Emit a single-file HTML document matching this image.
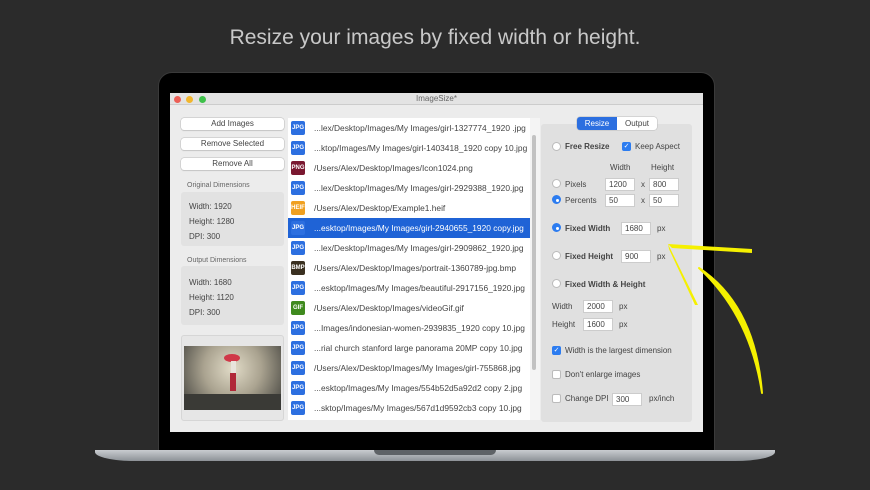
<!DOCTYPE html>
<html><head><style>
*{margin:0;padding:0;box-sizing:border-box}
body{width:870px;height:490px;background:#2b2b2b;position:relative;overflow:hidden;font-family:"Liberation Sans",sans-serif}
.a{position:absolute}
.title{top:26px;left:0;width:870px;text-align:center;color:#c8c8c8;font-size:21px}
.bez{left:158px;top:72px;width:557px;height:380px;background:#000;border-radius:14px 14px 0 0;border:1px solid #3a3a3a}
.base{left:95px;top:450px;width:680px;height:11px;background:linear-gradient(#c9ccd0,#8d9297);border-radius:0 0 40px 40px/0 0 9px 9px}
.notch{left:374px;top:450px;width:122px;height:5px;background:#5e6266;border-radius:0 0 5px 5px}
.win{left:170px;top:93px;width:533px;height:339px;background:#ececec}
.tb{left:0;top:0;width:533px;height:12px;background:#e3e3e3;border-bottom:1px solid #ccc;font-size:8px;color:#666;text-align:center;line-height:12px}
.dot{width:7px;height:7px;border-radius:50%;top:3px}
.btn{left:11px;width:103px;height:12px;background:#fff;border-radius:3px;box-shadow:0 0 0 .5px #bbb,0 1px 1px #ccc;font-size:8px;color:#444;text-align:center;line-height:12px}
.lab{font-size:7px;color:#666;left:17px}
.box{left:11px;width:103px;background:#e2e2e2;border-radius:3px;font-size:8px;color:#444}
.box div{position:absolute;left:8px}
.list{left:118px;top:25px;width:242px;height:302px;background:#fff}
.row{position:absolute;left:0;width:242px;height:20px;font-size:8.4px;color:#444;line-height:20px;white-space:nowrap}
.row span.i{position:absolute;left:3px;top:3px;width:14px;height:14px;border-radius:2px;color:#fff;font-size:6px;font-weight:bold;text-align:center;line-height:14px}
.row span.t{position:absolute;left:26px}
.sel{background:#1f63d6;color:#fff}
.rp{left:371px;top:31px;width:151px;height:298px;background:#e0e0e0;border-radius:3px;font-size:8px;color:#444}
.rp .a{white-space:nowrap}
.rad{width:9px;height:9px;border-radius:50%;background:#fff;border:1px solid #bbb}
.rad.on{background:#2c7cf0;border-color:#2c7cf0}
.rad.on:after{content:"";position:absolute;left:2.5px;top:2.5px;width:3px;height:3px;background:#fff;border-radius:50%}
.cb{width:9px;height:9px;border-radius:2px;background:#fff;border:1px solid #bbb}
.cb.on{background:#2c7cf0;border-color:#2c7cf0;color:#fff;font-size:7px;line-height:7px;text-align:center}
.in{height:13px;background:#fff;border:1px solid #ccc;font-size:8px;line-height:11px;padding-left:3px}
b{font-weight:bold}
</style></head><body>
<div class="a title">Resize your images by fixed width or height.</div>
<div class="a bez"></div>
<div class="a base"></div><div class="a notch"></div>
<div class="a win">
 <div class="a tb">ImageSize*</div>
 <div class="a dot" style="left:4px;background:#ec5f56"></div>
 <div class="a dot" style="left:16px;background:#f2b62c"></div>
 <div class="a dot" style="left:29px;background:#3ec14a"></div>
 <div class="a btn" style="top:25px">Add Images</div>
 <div class="a btn" style="top:45px">Remove Selected</div>
 <div class="a btn" style="top:65px">Remove All</div>
 <div class="a lab" style="top:89px">Original Dimensions</div>
 <div class="a box" style="top:99px;height:54px"><div style="top:10px">Width: 1920</div><div style="top:25px">Height: 1280</div><div style="top:40px">DPI: 300</div></div>
 <div class="a lab" style="top:164px">Output Dimensions</div>
 <div class="a box" style="top:173px;height:59px"><div style="top:12px">Width: 1680</div><div style="top:27px">Height: 1120</div><div style="top:42px">DPI: 300</div></div>
 <div class="a box" style="top:242px;height:86px;background:#e6e6e6;border:1px solid #d6d6d6"></div>
 <div class="a" style="left:14px;top:253px;width:97px;height:64px;background:radial-gradient(circle at 50% 35%,#e2dcc8,#aaa390 45%,#5a5850 85%)"><div class="a" style="left:40px;top:8px;width:16px;height:8px;background:#d03848;border-radius:50%"></div><div class="a" style="left:47px;top:15px;width:5px;height:12px;background:#e8e4dc"></div><div class="a" style="left:46px;top:27px;width:6px;height:18px;background:#b02838"></div><div class="a" style="left:0;top:48px;width:97px;height:16px;background:#3a3a36"></div></div>
 <div class="a list">
  <div class="row" style="top:0"><span class="i" style="background:#2c6fe0">JPG</span><span class="t">...lex/Desktop/Images/My Images/girl-1327774_1920 .jpg</span></div>
  <div class="row" style="top:20px"><span class="i" style="background:#2c6fe0">JPG</span><span class="t">...ktop/Images/My Images/girl-1403418_1920 copy 10.jpg</span></div>
  <div class="row" style="top:40px"><span class="i" style="background:#7a1830">PNG</span><span class="t">/Users/Alex/Desktop/Images/Icon1024.png</span></div>
  <div class="row" style="top:60px"><span class="i" style="background:#2c6fe0">JPG</span><span class="t">...lex/Desktop/Images/My Images/girl-2929388_1920.jpg</span></div>
  <div class="row" style="top:80px"><span class="i" style="background:#f0a020">HEIF</span><span class="t">/Users/Alex/Desktop/Example1.heif</span></div>
  <div class="row sel" style="top:100px"><span class="i" style="background:#2c6fe0">JPG</span><span class="t">...esktop/Images/My Images/girl-2940655_1920 copy.jpg</span></div>
  <div class="row" style="top:120px"><span class="i" style="background:#2c6fe0">JPG</span><span class="t">...lex/Desktop/Images/My Images/girl-2909862_1920.jpg</span></div>
  <div class="row" style="top:140px"><span class="i" style="background:#3a3020">BMP</span><span class="t">/Users/Alex/Desktop/Images/portrait-1360789-jpg.bmp</span></div>
  <div class="row" style="top:160px"><span class="i" style="background:#2c6fe0">JPG</span><span class="t">...esktop/Images/My Images/beautiful-2917156_1920.jpg</span></div>
  <div class="row" style="top:180px"><span class="i" style="background:#3f8a1e">GIF</span><span class="t">/Users/Alex/Desktop/Images/videoGif.gif</span></div>
  <div class="row" style="top:200px"><span class="i" style="background:#2c6fe0">JPG</span><span class="t">...Images/indonesian-women-2939835_1920 copy 10.jpg</span></div>
  <div class="row" style="top:220px"><span class="i" style="background:#2c6fe0">JPG</span><span class="t">...rial church stanford large panorama 20MP copy 10.jpg</span></div>
  <div class="row" style="top:240px"><span class="i" style="background:#2c6fe0">JPG</span><span class="t">/Users/Alex/Desktop/Images/My Images/girl-755868.jpg</span></div>
  <div class="row" style="top:260px"><span class="i" style="background:#2c6fe0">JPG</span><span class="t">...esktop/Images/My Images/554b52d5a92d2 copy 2.jpg</span></div>
  <div class="row" style="top:280px"><span class="i" style="background:#2c6fe0">JPG</span><span class="t">...sktop/Images/My Images/567d1d9592cb3 copy 10.jpg</span></div>
 </div>
 <div class="a" style="left:360px;top:25px;width:10px;height:302px;background:#f4f4f4"></div>
 <div class="a" style="left:362px;top:42px;width:4px;height:235px;background:#c2c2c2;border-radius:2px"></div>
 <div class="a rp">
  <div class="a rad" style="left:11px;top:18px"></div><div class="a" style="left:24px;top:18px"><b>Free Resize</b></div>
  <div class="a cb on" style="left:81px;top:18px">✓</div><div class="a" style="left:94px;top:18px">Keep Aspect</div>
  <div class="a" style="left:69px;top:39px">Width</div><div class="a" style="left:110px;top:39px">Height</div>
  <div class="a rad" style="left:11px;top:55px"></div><div class="a" style="left:24px;top:56px">Pixels</div>
  <div class="a in" style="left:64px;top:54px;width:30px">1200</div><div class="a" style="left:100px;top:56px">x</div><div class="a in" style="left:108px;top:54px;width:30px">800</div>
  <div class="a rad on" style="left:11px;top:71px"></div><div class="a" style="left:24px;top:72px">Percents</div>
  <div class="a in" style="left:64px;top:70px;width:30px">50</div><div class="a" style="left:100px;top:72px">x</div><div class="a in" style="left:108px;top:70px;width:30px">50</div>
  <div class="a rad on" style="left:11px;top:99px"></div><div class="a" style="left:24px;top:100px"><b>Fixed Width</b></div>
  <div class="a in" style="left:80px;top:98px;width:30px">1680</div><div class="a" style="left:116px;top:100px">px</div>
  <div class="a rad" style="left:11px;top:127px"></div><div class="a" style="left:24px;top:128px"><b>Fixed Height</b></div>
  <div class="a in" style="left:80px;top:126px;width:30px">900</div><div class="a" style="left:116px;top:128px">px</div>
  <div class="a rad" style="left:11px;top:155px"></div><div class="a" style="left:24px;top:156px"><b>Fixed Width &amp; Height</b></div>
  <div class="a" style="left:11px;top:178px">Width</div><div class="a in" style="left:42px;top:176px;width:30px">2000</div><div class="a" style="left:78px;top:178px">px</div>
  <div class="a" style="left:11px;top:196px">Height</div><div class="a in" style="left:42px;top:194px;width:30px">1600</div><div class="a" style="left:78px;top:196px">px</div>
  <div class="a cb on" style="left:11px;top:222px">✓</div><div class="a" style="left:24px;top:222px">Width is the largest dimension</div>
  <div class="a cb" style="left:11px;top:246px"></div><div class="a" style="left:24px;top:246px">Don't enlarge images</div>
  <div class="a cb" style="left:11px;top:270px"></div><div class="a" style="left:24px;top:270px">Change DPI</div>
  <div class="a in" style="left:71px;top:269px;width:30px">300</div><div class="a" style="left:108px;top:270px">px/inch</div>
 </div>
 <div class="a" style="left:407px;top:24px;width:80px;height:13px;background:#fff;border-radius:3px;box-shadow:0 0 0 .5px #bbb;font-size:8px;line-height:13px;color:#444">
  <div class="a" style="left:0;top:0;width:40px;height:13px;background:#2c6fe0;color:#fff;text-align:center;border-radius:3px 0 0 3px">Resize</div>
  <div class="a" style="left:40px;width:40px;text-align:center">Output</div>
 </div>
</div>
<svg class="a" style="left:0;top:0" width="870" height="490">
 <polygon points="668,244 752,249 752,253 672,248" fill="#f5f000"/>
 <polygon points="668,244 698,305 695,305 669,249" fill="#f5f000"/>
 <path d="M699,268 Q755,305 762,393 Q750,315 699,268Z" fill="#f5f000" stroke="#f5f000" stroke-width="2" stroke-linejoin="round"/>
</svg>
</body></html>
